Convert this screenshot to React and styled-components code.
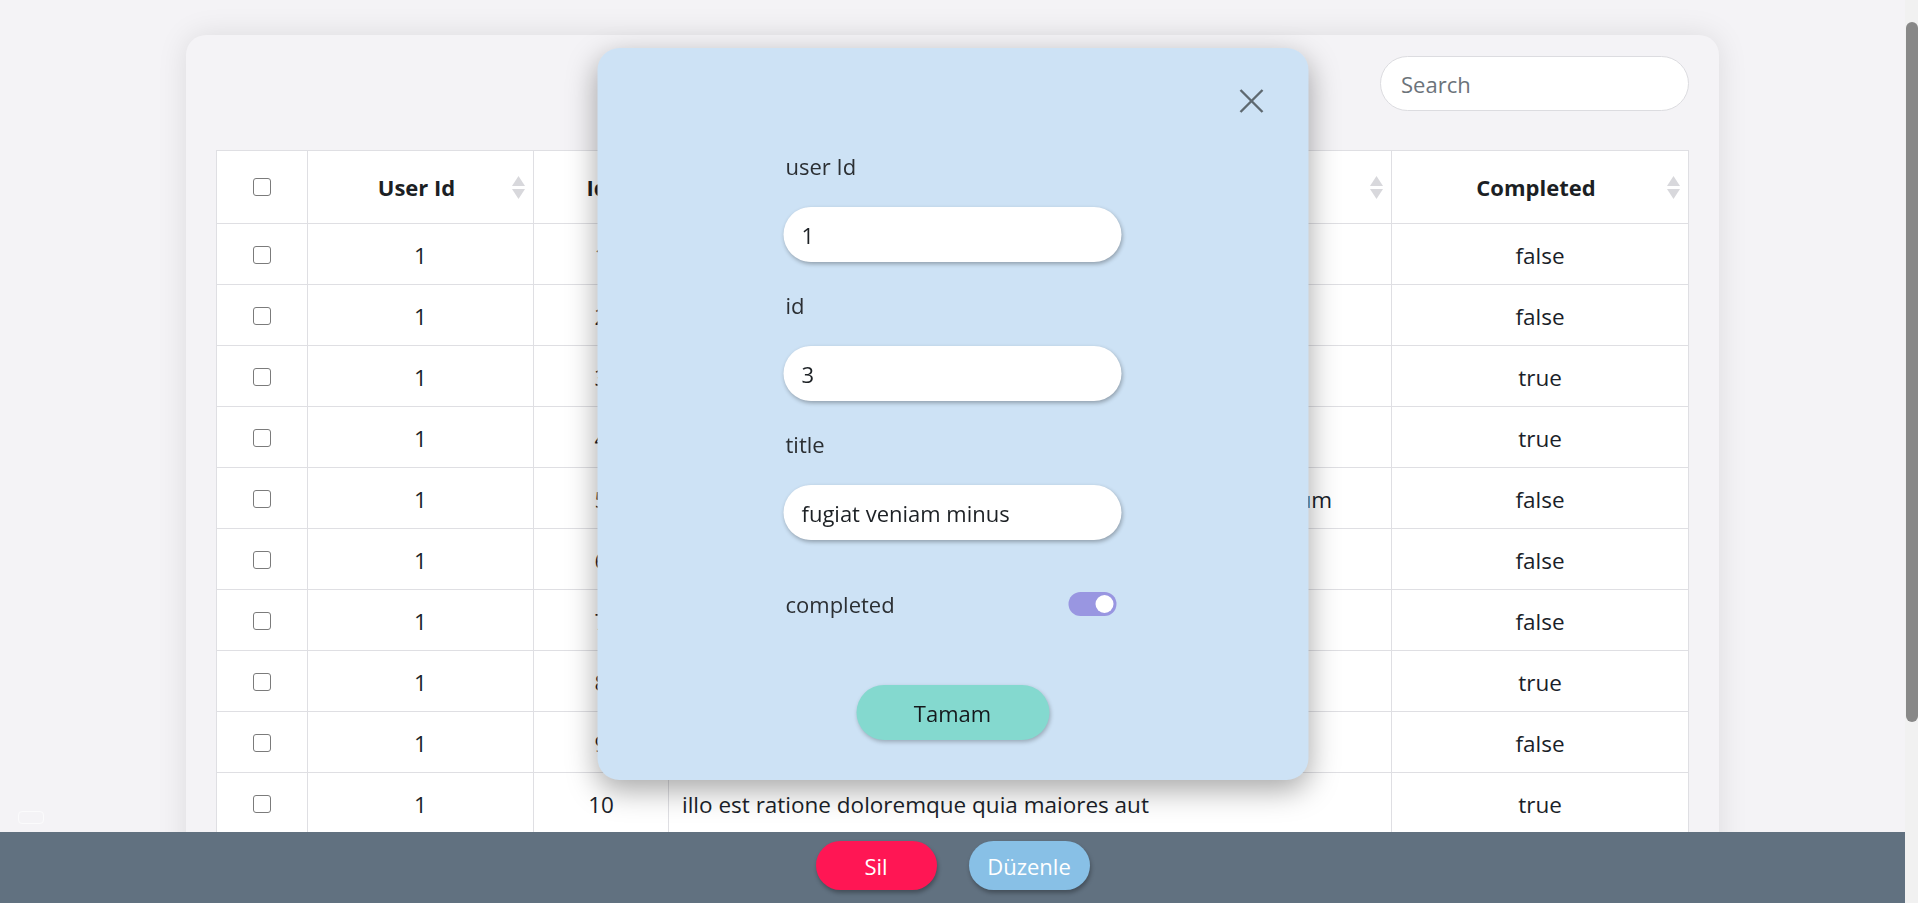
import styled, { createGlobalStyle } from "styled-components";

const GlobalStyle = createGlobalStyle`
  html, body {
    overflow: hidden;
  }
  body {
    margin: 0;
    background: #f4f3f6;
    font-family: "Open Sans", "Noto Sans", sans-serif;
    color: #212529;
  }
  * {
    box-sizing: border-box;
  }
`;

const todos = [
  { userId: 1, id: 1, title: "delectus aut autem", completed: false },
  { userId: 1, id: 2, title: "quis ut nam facilis et officia qui", completed: false },
  { userId: 1, id: 3, title: "fugiat veniam minus", completed: true },
  { userId: 1, id: 4, title: "et porro tempora", completed: true },
  { userId: 1, id: 5, title: "laboriosam mollitia et enim quasi adipisci quia provident illum", completed: false },
  { userId: 1, id: 6, title: "qui ullam ratione quibusdam voluptatem quia omnis", completed: false },
  { userId: 1, id: 7, title: "illo expedita consequatur quia in", completed: false },
  { userId: 1, id: 8, title: "quo adipisci enim quam ut ab", completed: true },
  { userId: 1, id: 9, title: "molestiae perspiciatis ipsa", completed: false },
  { userId: 1, id: 10, title: "illo est ratione doloremque quia maiores aut", completed: true },
  { userId: 1, id: 11, title: "vero rerum temporibus dolor", completed: true },
  { userId: 1, id: 12, title: "ipsa repellendus fugit nisi", completed: true },
  { userId: 1, id: 13, title: "et doloremque nulla", completed: false },
  { userId: 1, id: 14, title: "repellendus sunt dolores architecto voluptatum", completed: true },
];

const SCROLLBAR = 13;

const Shell = styled.div`
  display: flex;
  height: 100vh;
  overflow: hidden;
`;

const Viewport = styled.main`
  flex: 1;
  min-width: 0;
  overflow: hidden;
`;

const ScrollTrack = styled.div`
  width: ${SCROLLBAR}px;
  flex-shrink: 0;
  padding: 22px 0 0 1px;
  background: #f1f1f1;
`;

const ScrollThumb = styled.div`
  height: 700px;
  border-radius: 6px;
  background: #888;
`;

const Page = styled.div`
  padding: 35px 0 57px;
`;

const Card = styled.section`
  width: 1533px;
  margin: 0 auto;
  padding: 21px 30px 30px;
  border-radius: 20px;
  background: #f4f3f6;
  box-shadow: 0 0 30px rgba(0, 0, 0, 0.1);
`;

const Toolbar = styled.div`
  display: flex;
  justify-content: flex-end;
  margin-bottom: 39px;
`;

const SearchInput = styled.input`
  width: 309px;
  height: 55px;
  padding: 0 20px;
  border: 1px solid #dcdce0;
  border-radius: 28px;
  background: #fff;
  font: inherit;
  font-size: 22px;
  color: #212529;
  outline: none;
  &::placeholder {
    color: #6c737a;
  }
`;

const Table = styled.table`
  width: 100%;
  table-layout: fixed;
  border-collapse: collapse;
  background: #fff;
  font-size: 22.5px;
  color: #1b1f2a;
`;

const Col = styled.col`
  width: ${(p) => p.$w}px;
`;

const Th = styled.th`
  height: 73px;
  padding: 0 ${(p) => (p.$plain ? "0" : "8px")} 0 0;
  border: 1px solid #dfdfe3;
  font-size: 22px;
  font-weight: 700;
  color: #1c1f24;
`;

const HeadInner = styled.div`
  display: grid;
  grid-template-columns: 1fr auto 1fr;
  align-items: center;
`;

const SortIcon = styled.svg`
  justify-self: end;
  width: 13px;
  height: 23px;
  fill: #d8d8dc;
`;

const Td = styled.td`
  height: 61px;
  padding: 2px ${(p) => (p.$left ? "13px" : "0")} 0;
  border: 1px solid #dfdfe3;
  text-align: ${(p) => (p.$left ? "left" : "center")};
  white-space: nowrap;
  overflow: hidden;
`;

const Check = styled.input.attrs({ type: "checkbox" })`
  appearance: none;
  display: block;
  margin: 0 auto;
  width: 18px;
  height: 18px;
  border: 1.5px solid #7b7b7b;
  border-radius: 3px;
  background: #fff;
`;

const Ghost = styled.div`
  position: fixed;
  left: 18px;
  bottom: 79px;
  width: 26px;
  height: 13px;
  border: 1.5px solid #fbfbfc;
  border-radius: 4px;
`;

const Modal = styled.div`
  position: fixed;
  top: 48px;
  left: calc((100% - ${SCROLLBAR}px) / 2);
  transform: translateX(-50%);
  width: 711px;
  display: flex;
  flex-direction: column;
  align-items: center;
  border-radius: 22px;
  background: #cde2f5;
  box-shadow: 0 10px 30px rgba(0, 0, 0, 0.35);
  z-index: 10;
`;

const CloseRow = styled.div`
  align-self: stretch;
  display: flex;
  justify-content: flex-end;
  padding: 40px 44px 0 0;
`;

const CloseButton = styled.button`
  width: 26px;
  height: 26px;
  padding: 0;
  border: none;
  background: none;
  svg {
    display: block;
    stroke: #5e6970;
    stroke-width: 2.4;
  }
`;

const Form = styled.form`
  width: 338px;
  margin-top: 38px;
  display: flex;
  flex-direction: column;
`;

const Field = styled.div`
  display: flex;
  flex-direction: column;
  margin-bottom: 29px;
`;

const Label = styled.label`
  line-height: 28px;
  font-size: 22px;
  color: #2b2f33;
  margin-bottom: ${(p) => (p.$inline ? "0" : "27px")};
  padding-left: 2px;
`;

const FieldInput = styled.input`
  height: 55px;
  padding: 0 18px;
  border: none;
  border-radius: 28px;
  background: #fff;
  font: inherit;
  font-size: 22px;
  color: #1d2125;
  box-shadow: 1px 2px 4px rgba(0, 0, 0, 0.3);
  outline: none;
`;

const SwitchRow = styled.div`
  display: flex;
  justify-content: space-between;
  align-items: center;
  height: 28px;
  margin-top: 21px;
  padding-right: 5px;
`;

const Switch = styled.span`
  display: flex;
  justify-content: ${(p) => (p.$on ? "flex-end" : "flex-start")};
  align-items: center;
  width: 48px;
  height: 24px;
  padding: 0 3px;
  border-radius: 12px;
  background: ${(p) => (p.$on ? "#9996e1" : "#b9bcc4")};
  &::after {
    content: "";
    width: 18px;
    height: 18px;
    border-radius: 50%;
    background: #fff;
  }
`;

const OkButton = styled.button`
  width: 193px;
  height: 55px;
  margin: 67px 0 40px;
  border: none;
  border-radius: 28px;
  background: #84d9cf;
  font: inherit;
  font-size: 22px;
  color: #15191c;
  box-shadow: 1px 2px 4px rgba(0, 0, 0, 0.25);
`;

const ActionBar = styled.footer`
  position: fixed;
  left: 0;
  right: ${SCROLLBAR}px;
  bottom: 0;
  height: 71px;
  display: flex;
  justify-content: center;
  align-items: center;
  gap: 32px;
  padding-bottom: 4px;
  background: #617180;
  z-index: 5;
`;

const ActionButton = styled.button`
  width: 121px;
  height: 49px;
  border: none;
  border-radius: 25px;
  background: ${(p) => (p.$variant === "danger" ? "#ff1654" : "#88c0e6")};
  color: #fff;
  font: inherit;
  font-size: 22px;
  box-shadow: 1px 3px 4px rgba(0, 0, 0, 0.3);
`;

const columns = [
  { key: "userId", label: "User Id", w: 226 },
  { key: "id", label: "Id", w: 135 },
  { key: "title", label: "Title", w: 723 },
  { key: "completed", label: "Completed", w: 297 },
];

const SortTh = ({ children }) => (
  <Th>
    <HeadInner>
      <span />
      <span>{children}</span>
      <SortIcon viewBox="0 0 13 23">
        <polygon points="6.5,0 13,10 0,10" />
        <polygon points="0,13 13,13 6.5,23" />
      </SortIcon>
    </HeadInner>
  </Th>
);

const App = () => {
  return (
    <>
      <GlobalStyle />
      <Shell>
        <Viewport>
          <Page>
            <Card>
              <Toolbar>
                <SearchInput placeholder="Search" />
              </Toolbar>
              <Table>
                <colgroup>
                  <Col $w={91} />
                  {columns.map((c) => (
                    <Col key={c.key} $w={c.w} />
                  ))}
                </colgroup>
                <thead>
                  <tr>
                    <Th $plain>
                      <Check />
                    </Th>
                    {columns.map((c) => (
                      <SortTh key={c.key}>{c.label}</SortTh>
                    ))}
                  </tr>
                </thead>
                <tbody>
                  {todos.map((t) => (
                    <tr key={t.id}>
                      <Td>
                        <Check />
                      </Td>
                      <Td>{t.userId}</Td>
                      <Td>{t.id}</Td>
                      <Td $left>{t.title}</Td>
                      <Td>{String(t.completed)}</Td>
                    </tr>
                  ))}
                </tbody>
              </Table>
            </Card>
          </Page>
        </Viewport>
        <ScrollTrack>
          <ScrollThumb />
        </ScrollTrack>
      </Shell>

      <Ghost />

      <Modal>
        <CloseRow>
          <CloseButton type="button" aria-label="close">
            <svg width="26" height="26" viewBox="0 0 26 26">
              <line x1="2" y1="2" x2="24" y2="24" />
              <line x1="24" y1="2" x2="2" y2="24" />
            </svg>
          </CloseButton>
        </CloseRow>
        <Form>
          <Field>
            <Label>user Id</Label>
            <FieldInput defaultValue="1" />
          </Field>
          <Field>
            <Label>id</Label>
            <FieldInput defaultValue="3" />
          </Field>
          <Field>
            <Label>title</Label>
            <FieldInput defaultValue="fugiat veniam minus" />
          </Field>
          <SwitchRow>
            <Label $inline>completed</Label>
            <Switch $on />
          </SwitchRow>
        </Form>
        <OkButton type="button">Tamam</OkButton>
      </Modal>

      <ActionBar>
        <ActionButton $variant="danger">Sil</ActionButton>
        <ActionButton>Düzenle</ActionButton>
      </ActionBar>
    </>
  );
};

export default App;
